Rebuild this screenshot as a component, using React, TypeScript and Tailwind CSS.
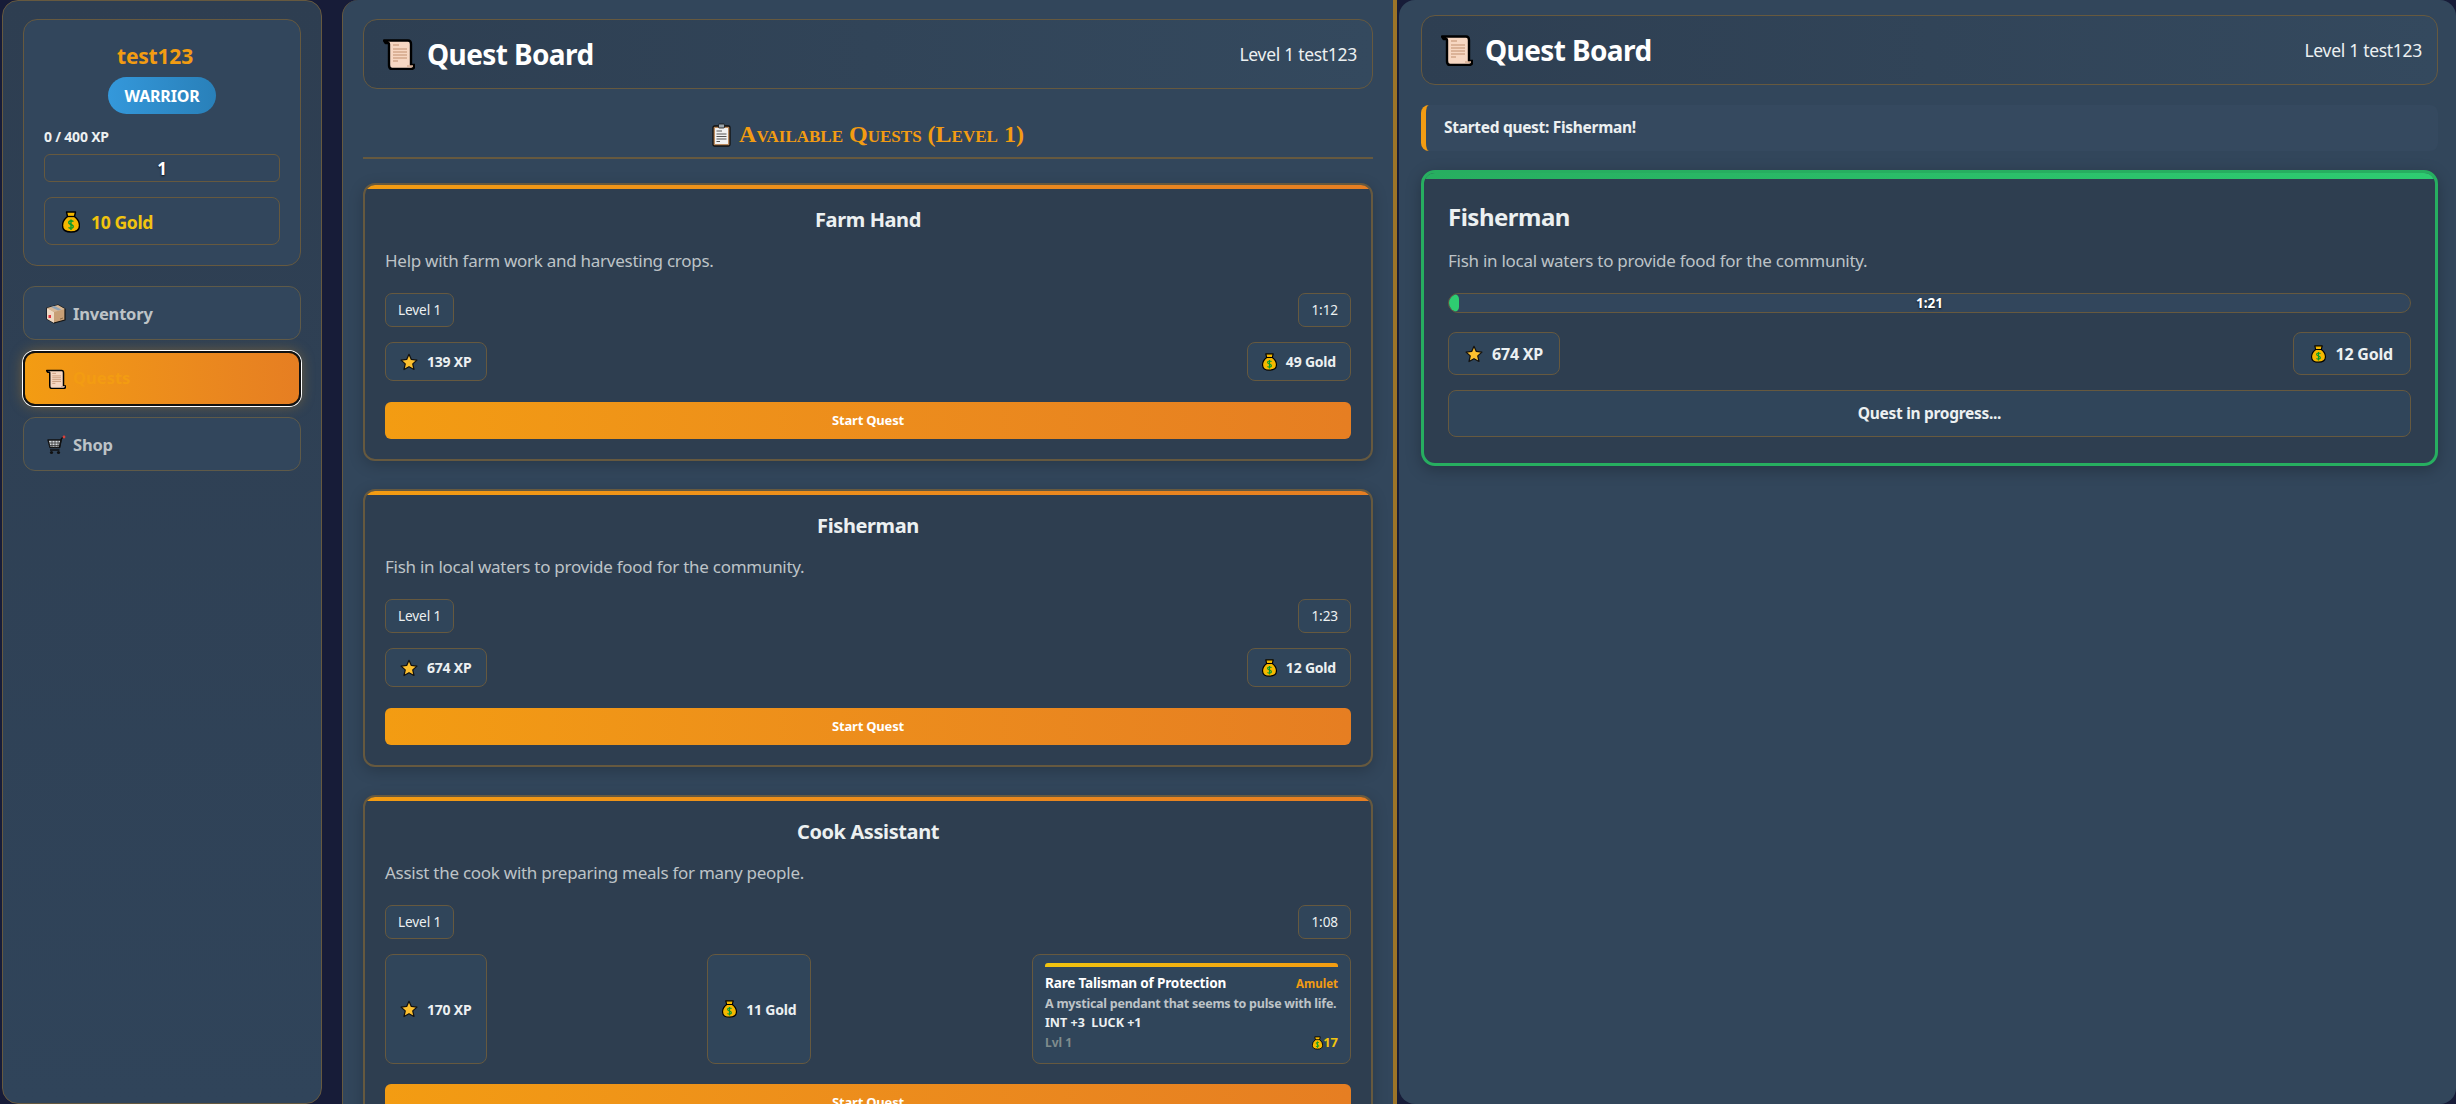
import React from "react";

function ScrollIcon({ className }: { className?: string }) {
  return (
    <svg viewBox="0 0 32 32" className={className}>
      <path
        d="M1 2.5 H25 Q28 2.5 28 6 V27 H31.5 Q31.5 31 28 31 H9 Q6 31 6 27 V6 Q6 5 5 5 H2.5 Z"
        fill="#f7d7c2"
        stroke="#000"
        strokeWidth="2.4"
        strokeLinejoin="round"
      />
      <path d="M24 28 H30" stroke="#d8ae92" strokeWidth="1.5" />
      <path
        d="M10 7 H16 M10 11 H24 M10 14 H24 M10 17 H24 M10 20 H24 M10 23 H15"
        stroke="#c2906e"
        strokeWidth="1.2"
      />
    </svg>
  );
}

function BagIcon({ className }: { className?: string }) {
  return (
    <svg viewBox="0 0 18 22" className={className}>
      <path
        d="M4.5 1 H13.5 L12.5 5.5 Q17.5 9.5 17.5 14.5 Q17.5 21 9 21 Q0.5 21 0.5 14.5 Q0.5 9.5 5.5 5.5 Z"
        fill="#f5b800"
        stroke="#000"
        strokeWidth="1.4"
        strokeLinejoin="round"
      />
      <path d="M5 5.5 H13" stroke="#000" strokeWidth="1.3" />
      <path
        d="M11.5 10.5 Q9 9 7 10.5 Q6 12.5 9 13.5 Q12 14.5 11 16.5 Q9 18 6.5 16.5 M9 8.5 V19"
        fill="none"
        stroke="#0a9a2a"
        strokeWidth="1.4"
      />
    </svg>
  );
}

function StarIcon({ className }: { className?: string }) {
  return (
    <svg viewBox="0 0 20 20" className={className}>
      <path
        d="M10 1.5 L12.6 7.2 L18.8 7.9 L14.2 12.1 L15.5 18.3 L10 15.2 L4.5 18.3 L5.8 12.1 L1.2 7.9 L7.4 7.2 Z"
        fill="#fdc02f"
        stroke="#111"
        strokeWidth="1.4"
        strokeLinejoin="round"
      />
    </svg>
  );
}

function BoxIcon({ className }: { className?: string }) {
  return (
    <svg viewBox="0 0 20 20" className={className}>
      <path d="M1 4 L12 1 L19 5 L19 16 L8 19 L1 15 Z" fill="#c79f76" stroke="#111" strokeWidth="1.2" strokeLinejoin="round" />
      <path d="M1 4 L8 8 L8 19 L1 15 Z" fill="#eed9c4" />
      <path d="M1 4 L12 1 L19 5 L8 8 Z" fill="#d8b896" />
      <path d="M5 3 L12 6.5 L15.5 5.5 L8.5 2 Z" fill="#8fa3b5" />
      <rect x="2.5" y="11" width="2.5" height="3" fill="#e0333f" />
      <path d="M14 15 L17 14" stroke="#8a6a48" strokeWidth="1" />
    </svg>
  );
}

function CartIcon({ className }: { className?: string }) {
  return (
    <svg viewBox="0 0 20 20" className={className}>
      <path d="M2 5 H15 L13.5 12.5 H4 Z" fill="#d5d9dc" stroke="#111" strokeWidth="1.3" strokeLinejoin="round" />
      <path d="M3 8 H14.5 M3.5 10.5 H14 M6 5 V12.5 M9 5 V12.5 M12 5 V12.5" stroke="#333" strokeWidth="0.8" />
      <path d="M13.5 12.5 L15.5 3.5 L18 2 M4 15 H13.5" fill="none" stroke="#111" strokeWidth="1.4" />
      <circle cx="18" cy="2" r="1.4" fill="#d8403a" />
      <circle cx="5.5" cy="17.5" r="1.6" fill="#111" />
      <circle cx="12.5" cy="17.5" r="1.6" fill="#111" />
    </svg>
  );
}

function ClipboardIcon({ className }: { className?: string }) {
  return (
    <svg viewBox="0 0 19 24" className={className}>
      <rect x="1" y="3" width="17" height="20" rx="1.5" fill="#b98a5e" stroke="#111" strokeWidth="1.3" />
      <rect x="3" y="5" width="13" height="16" fill="#f2f2f2" />
      <rect x="6.5" y="1" width="6" height="4" rx="1" fill="#9aa5ad" stroke="#111" strokeWidth="0.8" />
      <path d="M4.5 8 H10 M4.5 11 H14.5 M4.5 13.5 H14.5 M4.5 16 H14.5 M4.5 18.5 H8" stroke="#555" strokeWidth="1" />
    </svg>
  );
}

function PageHeader() {
  return (
    <header className="flex h-[70px] shrink-0 items-center justify-between rounded-[14px] border border-[#66593f] bg-gradient-to-r from-[#2e3f52] to-[#34495e] pl-[19px] pr-[15px]">
      <div className="flex items-center gap-3">
        <ScrollIcon className="h-8 w-8" />
        <h1 className="text-[28px] font-bold tracking-[-0.6px] text-white">Quest Board</h1>
      </div>
      <span className="text-[17.5px] tracking-[-0.3px] text-[#ecf0f1]">Level 1 test123</span>
    </header>
  );
}

function Reward({ icon, label, className }: { icon: "xp" | "gold"; label: string; className?: string }) {
  return (
    <div className={`flex items-center gap-[9px] rounded-[8px] border border-[#66593f] bg-[#30455a] text-[14px] font-bold tracking-[-0.2px] text-[#ecf0f1] ${className ?? "px-[14px]"}`}>
      {icon === "xp" ? <StarIcon className="h-[18px] w-[18px]" /> : <BagIcon className="h-[18px] w-[15px]" />}
      {label}
    </div>
  );
}

function Badge({ label }: { label: string }) {
  return (
    <span className="flex h-[34px] items-center rounded-[7px] border border-[#66593f] bg-[#30455a] px-[12px] text-[13.6px] tracking-[-0.1px] text-[#ecf0f1]">
      {label}
    </span>
  );
}

function ItemCard() {
  return (
    <div className="flex w-[319px] flex-col rounded-[8px] border border-[#66593f] bg-[#30455a] px-3 pt-2 text-[12.5px] font-bold">
      <div className="h-1 rounded-t-[3px] bg-gradient-to-r from-[#f1c40f] to-[#f39c12]" />
      <div className="mt-[7px] flex h-[19px] items-center justify-between">
        <span className="text-[13.6px] tracking-[-0.2px] text-white">Rare Talisman of Protection</span>
        <span className="text-[11.5px] text-[#f39c12]">Amulet</span>
      </div>
      <p className="mt-[1px] h-[19px] whitespace-nowrap text-[12.5px] leading-[19px] tracking-[-0.25px] text-[#bdc3c7]">
        A mystical pendant that seems to pulse with life.
      </p>
      <p className="h-[19px] text-[12.5px] leading-[19px] text-[#ecf0f1]">INT +3 &nbsp;LUCK +1</p>
      <div className="mt-[1px] flex h-[19px] items-center justify-between">
        <span className="text-[12px] text-[#7f8c8d]">Lvl 1</span>
        <span className="flex items-center text-[13px] text-[#f1c40f]">
          <BagIcon className="h-[14px] w-[11px]" />
          17
        </span>
      </div>
    </div>
  );
}

type Quest = { title: string; desc: string; time: string; xp: string; gold: string; item?: boolean };

const QUESTS: Quest[] = [
  { title: "Farm Hand", desc: "Help with farm work and harvesting crops.", time: "1:12", xp: "139 XP", gold: "49 Gold" },
  { title: "Fisherman", desc: "Fish in local waters to provide food for the community.", time: "1:23", xp: "674 XP", gold: "12 Gold" },
  { title: "Cook Assistant", desc: "Assist the cook with preparing meals for many people.", time: "1:08", xp: "170 XP", gold: "11 Gold", item: true },
];

function QuestCard({ quest }: { quest: Quest }) {
  return (
    <article className="relative shrink-0 overflow-hidden rounded-[12px] border-2 border-[#66593f] bg-[#2e3e50] p-5 shadow-[0_4px_15px_rgba(0,0,0,0.2)]">
      <div className="absolute inset-x-0 top-0 h-1 bg-gradient-to-r from-[#f39c12] to-[#e67e22]" />
      <h3 className="h-[30px] text-center text-[20px] font-bold leading-[30px] tracking-[-0.4px] text-[#ecf0f1]">{quest.title}</h3>
      <p className="mt-[14px] h-6 text-[17px] leading-6 tracking-[-0.27px] text-[#bdc3c7]">{quest.desc}</p>
      <div className="mt-5 flex justify-between">
        <Badge label="Level 1" />
        <Badge label={quest.time} />
      </div>
      <div className={`mt-[15px] flex justify-between ${quest.item ? "h-[110px]" : "h-[39px]"}`}>
        <Reward icon="xp" label={quest.xp} />
        <Reward icon="gold" label={quest.gold} />
        {quest.item && <ItemCard />}
      </div>
      <button className={`flex h-[37px] w-full items-center justify-center rounded-[6px] bg-gradient-to-r from-[#f39c12] to-[#e67e22] text-[13px] font-bold tracking-[-0.2px] text-white ${quest.item ? "mt-5" : "mt-[21px]"}`}>
        Start Quest
      </button>
    </article>
  );
}

function NavItem({ icon, label, active }: { icon: React.ReactNode; label: string; active?: boolean }) {
  return (
    <div
      className={
        active
          ? "flex h-[55px] items-center gap-[7px] rounded-[12px] border-2 border-[#111] bg-gradient-to-r from-[#f39c12] to-[#e67e22] pl-[21px] text-[16.5px] font-bold text-[#f39c12] shadow-[0_0_0_1px_#fff,0_0_14px_rgba(243,156,18,0.35)]"
          : "flex h-[54px] items-center gap-[7px] rounded-[12px] border border-[#5f5a48] bg-[#32465c] pl-[22px] pt-[2px] text-[16.5px] font-bold tracking-[-0.2px] text-[#bdc3c7]"
      }
    >
      {icon}
      {label}
    </div>
  );
}

function Sidebar() {
  return (
    <aside className="ml-[2px] flex h-[1104px] w-[320px] shrink-0 flex-col rounded-[16px] border border-[#66593f] bg-gradient-to-b from-[#2e3e51] to-[#30445a] px-5 pt-[18px]">
      <section className="flex h-[247px] flex-col rounded-[14px] border border-[#66593f] bg-[#32465c] px-5">
        <div className="mt-[21px] h-[30px] pr-[14px] text-center text-[21px] font-bold leading-[30px] tracking-[-0.2px] text-[#f39c12]">test123</div>
        <span className="mx-auto mt-[6px] flex h-[37px] w-[108px] items-center justify-center rounded-full bg-gradient-to-r from-[#3498db] to-[#2980b9] text-[16px] font-bold tracking-[-0.2px] text-white">
          WARRIOR
        </span>
        <div className="mt-[14px] h-[18px] text-[14px] font-bold leading-[18px] tracking-[-0.2px] text-[#ecf0f1]">0 / 400 XP</div>
        <div className="mt-[8px] flex h-[28px] items-center justify-center rounded-[6px] border border-[#66593f] bg-[#32465c] pt-[2px] text-[17px] font-bold text-white [text-shadow:0_1px_2px_rgba(0,0,0,0.8)]">
          1
        </div>
        <div className="mt-[15px] flex h-[48px] items-center gap-[11px] rounded-[8px] border border-[#66593f] pl-[17px] pt-[2px] text-[17.6px] font-bold tracking-[-0.4px] text-[#f1c40f]">
          <BagIcon className="h-[22px] w-[18px]" />
          10 Gold
        </div>
      </section>
      <nav className="mt-[20px] flex flex-col gap-[11px]">
        <NavItem icon={<BoxIcon className="h-5 w-5" />} label="Inventory" />
        <NavItem icon={<ScrollIcon className="h-5 w-5" />} label="Quests" active />
        <NavItem icon={<CartIcon className="h-5 w-5" />} label="Shop" />
      </nav>
    </aside>
  );
}

function MainPanel() {
  return (
    <main className="ml-5 flex h-[1104px] w-[1055px] shrink-0 flex-col overflow-hidden rounded-tl-[16px] border-l border-r-4 border-l-[#66593f] border-r-[#9c7428] bg-[#32465b] px-5 pt-[19px]">
      <PageHeader />
      <h2 className="mt-[20px] flex h-[50px] shrink-0 items-start justify-center gap-[8px] border-b-2 border-[#66593f] pt-[10px] font-['Liberation_Serif',serif] text-[24px] font-bold leading-[30px] text-[#f39c12] [font-variant-caps:small-caps]">
        <ClipboardIcon className="mt-[4px] h-[24px] w-[19px]" />
        Available Quests (Level 1)
      </h2>
      <div className="mt-6 flex flex-col gap-[28px]">
        {QUESTS.map((quest) => (
          <QuestCard key={quest.title} quest={quest} />
        ))}
      </div>
    </main>
  );
}

function ActivePanel() {
  return (
    <section className="ml-[2px] flex h-[1104px] min-w-0 flex-1 flex-col rounded-[16px] bg-[#32465b] pl-[22px] pr-[18px] pt-[15px]">
      <PageHeader />
      <div className="mt-[20px] flex h-[46px] items-center rounded-[8px] border-l-[5px] border-[#f39c12] bg-[#35495f] pl-[18px] text-[15.5px] font-bold tracking-[-0.3px] text-[#ecf0f1]">
        Started quest: Fisherman!
      </div>
      <article className="relative mt-[19px] h-[296px] overflow-hidden rounded-[14px] border-[3px] border-[#27ae60] bg-[#2e3e50] px-6 shadow-[0_4px_15px_rgba(0,0,0,0.25)]">
        <div className="absolute inset-x-0 top-0 h-[6px] bg-gradient-to-r from-[#27ae60] to-[#2ecc71]" />
        <h3 className="mt-[26px] h-9 text-[24px] font-bold leading-9 tracking-[-0.5px] text-[#ecf0f1]">Fisherman</h3>
        <p className="mt-[14px] h-6 text-[17px] leading-6 tracking-[-0.27px] text-[#bdc3c7]">Fish in local waters to provide food for the community.</p>
        <div className="relative mt-[20px] h-5 overflow-hidden rounded-full border border-[#66593f] bg-[#32465c]">
          <div className="h-full w-[10px] rounded-full bg-[#2ecc71]" />
          <span className="absolute inset-0 flex items-center justify-center text-[13.5px] font-bold text-white [text-shadow:0_1px_2px_rgba(0,0,0,0.8)]">1:21</span>
        </div>
        <div className="mt-[19px] flex h-[43px] justify-between">
          <Reward icon="xp" label="674 XP" className="px-[16px] text-[16px]" />
          <Reward icon="gold" label="12 Gold" className="px-[17px] text-[16px]" />
        </div>
        <div className="mt-[15px] flex h-[47px] items-center justify-center rounded-[8px] border border-[#66593f] bg-[#30455a] text-[15.5px] font-bold tracking-[-0.3px] text-[#ecf0f1]">
          Quest in progress...
        </div>
      </article>
    </section>
  );
}

export default function App() {
  return (
    <div className="h-[1104px] w-[2460px] overflow-hidden bg-white font-['Noto_Sans',sans-serif]">
      <div className="flex h-[1104px] w-[2456px] bg-[#171c38]">
        <Sidebar />
        <MainPanel />
        <ActivePanel />
      </div>
    </div>
  );
}
